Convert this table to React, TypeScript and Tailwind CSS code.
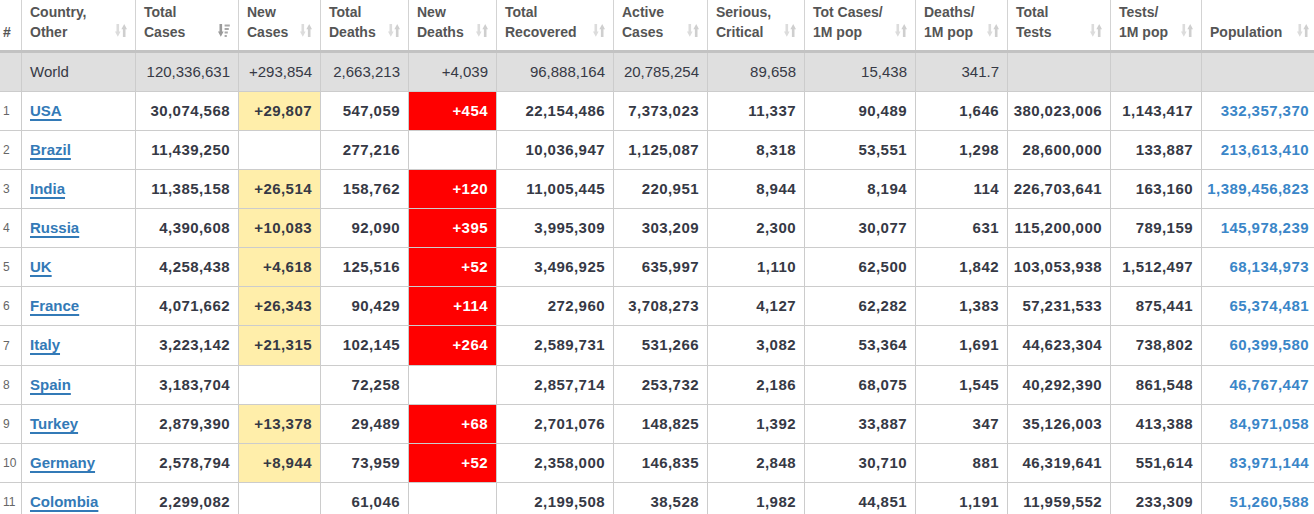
import React from 'react';

type Row = {
  n: string;
  country: string;
  cells: string[];
};

const headers: string[][] = [
  ['#'],
  ['Country,', 'Other'],
  ['Total', 'Cases'],
  ['New', 'Cases'],
  ['Total', 'Deaths'],
  ['New', 'Deaths'],
  ['Total', 'Recovered'],
  ['Active', 'Cases'],
  ['Serious,', 'Critical'],
  ['Tot Cases/', '1M pop'],
  ['Deaths/', '1M pop'],
  ['Total', 'Tests'],
  ['Tests/', '1M pop'],
  ['Population'],
];

const world = ['120,336,631', '+293,854', '2,663,213', '+4,039', '96,888,164', '20,785,254', '89,658', '15,438', '341.7', '', '', ''];

const rows: Row[] = [
  { n: '1', country: 'USA', cells: ['30,074,568', '+29,807', '547,059', '+454', '22,154,486', '7,373,023', '11,337', '90,489', '1,646', '380,023,006', '1,143,417', '332,357,370'] },
  { n: '2', country: 'Brazil', cells: ['11,439,250', '', '277,216', '', '10,036,947', '1,125,087', '8,318', '53,551', '1,298', '28,600,000', '133,887', '213,613,410'] },
  { n: '3', country: 'India', cells: ['11,385,158', '+26,514', '158,762', '+120', '11,005,445', '220,951', '8,944', '8,194', '114', '226,703,641', '163,160', '1,389,456,823'] },
  { n: '4', country: 'Russia', cells: ['4,390,608', '+10,083', '92,090', '+395', '3,995,309', '303,209', '2,300', '30,077', '631', '115,200,000', '789,159', '145,978,239'] },
  { n: '5', country: 'UK', cells: ['4,258,438', '+4,618', '125,516', '+52', '3,496,925', '635,997', '1,110', '62,500', '1,842', '103,053,938', '1,512,497', '68,134,973'] },
  { n: '6', country: 'France', cells: ['4,071,662', '+26,343', '90,429', '+114', '272,960', '3,708,273', '4,127', '62,282', '1,383', '57,231,533', '875,441', '65,374,481'] },
  { n: '7', country: 'Italy', cells: ['3,223,142', '+21,315', '102,145', '+264', '2,589,731', '531,266', '3,082', '53,364', '1,691', '44,623,304', '738,802', '60,399,580'] },
  { n: '8', country: 'Spain', cells: ['3,183,704', '', '72,258', '', '2,857,714', '253,732', '2,186', '68,075', '1,545', '40,292,390', '861,548', '46,767,447'] },
  { n: '9', country: 'Turkey', cells: ['2,879,390', '+13,378', '29,489', '+68', '2,701,076', '148,825', '1,392', '33,887', '347', '35,126,003', '413,388', '84,971,058'] },
  { n: '10', country: 'Germany', cells: ['2,578,794', '+8,944', '73,959', '+52', '2,358,000', '146,835', '2,848', '30,710', '881', '46,319,641', '551,614', '83,971,144'] },
  { n: '11', country: 'Colombia', cells: ['2,299,082', '', '61,046', '', '2,199,508', '38,528', '1,982', '44,851', '1,191', '11,959,552', '233,309', '51,260,588'] },
];

const gridCols =
  'grid grid-cols-[22px_114px_103px_82px_88px_88px_117px_94px_97px_111px_92px_103px_91px_116px]';

const SortIcon = ({ active }: { active?: boolean }) =>
  active ? (
    <svg width="12" height="13" viewBox="0 0 12 13" className="shrink-0 mb-[5px]">
      <rect x="1.5" y="0" width="2.6" height="8" fill="#9a9a9a" />
      <polygon points="0,7.5 5.6,7.5 2.8,12.8" fill="#9a9a9a" />
      <rect x="6.6" y="0.5" width="5.2" height="2" fill="#a8a8a8" />
      <rect x="6.6" y="4" width="4.2" height="2" fill="#a8a8a8" />
      <rect x="6.6" y="7.5" width="3.2" height="2" fill="#a8a8a8" />
      <rect x="6.6" y="11" width="2.2" height="2" fill="#a8a8a8" />
    </svg>
  ) : (
    <svg width="12" height="13" viewBox="0 0 12 13" className="shrink-0 mb-[5px]">
      <rect x="1.5" y="0" width="2.6" height="8" fill="#dcdcdc" />
      <polygon points="0,7.5 5.6,7.5 2.8,12.8" fill="#dcdcdc" />
      <polygon points="6.4,5.3 12,5.3 9.2,0" fill="#cfcfcf" />
      <rect x="7.9" y="5" width="2.6" height="8" fill="#cfcfcf" />
    </svg>
  );

const HeaderRow = () => (
  <div className={`${gridCols} h-[53px] border-b-[3px] border-[#c2c2c2] bg-white`}>
    {headers.map((h, i) => (
      <div
        key={i}
        className={`flex items-end justify-between border-r border-[#d3d3d3] pb-[8px] ${
          i === 0 ? 'pl-[3px]' : 'px-[8px]'
        }`}
      >
        <div className="text-[14px] font-bold leading-[20px] text-[#555555]">
          {h.map((line, j) => (
            <div key={j} className="whitespace-nowrap">
              {line}
            </div>
          ))}
        </div>
        {i > 0 && <SortIcon active={i === 2} />}
      </div>
    ))}
  </div>
);

const WorldRow = () => (
  <div className={`${gridCols} h-[39px] border-b border-[#cccccc] bg-[#dfdfdf] text-[15px] text-[#363945]`}>
    <div className="border-r border-[#cccccc]" />
    <div className="flex items-center border-r border-[#cccccc] pl-[8px]">World</div>
    {world.map((v, i) => (
      <div key={i} className="flex items-center justify-end border-r border-[#cccccc] pr-[8px]">
        {v}
      </div>
    ))}
  </div>
);

const DataRow = ({ row, tall }: { row: Row; tall?: boolean }) => (
  <div
    className={`${gridCols} ${
      tall ? 'h-[40px]' : 'h-[39px]'
    } border-b border-[#cccccc] bg-white text-[15px] font-bold text-[#363945]`}
  >
    <div className="flex items-center border-r border-[#cccccc] pl-[3px] text-[12px] font-normal text-[#666666]">
      {row.n}
    </div>
    <div className="flex items-center border-r border-[#cccccc] pl-[8px]">
      <a className="text-[#337ab7] underline decoration-2 underline-offset-[3px]">{row.country}</a>
    </div>
    {row.cells.map((v, i) => {
      let tone = '';
      if (i === 1 && v) tone = 'bg-[#ffeeaa]';
      if (i === 3 && v) tone = 'bg-[#ff0000] text-white';
      if (i === 11) tone = 'text-[#3a86c8]';
      return (
        <div
          key={i}
          className={`flex items-center justify-end border-r border-[#cccccc] pr-[8px] tracking-[0.45px] ${tone}`}
        >
          {v}
        </div>
      );
    })}
  </div>
);

export default function App() {
  return (
    <div className="h-[514px] w-full overflow-hidden bg-white font-['Liberation_Sans',Arial,sans-serif]">
      <div className="w-[1318px]">
        <HeaderRow />
        <WorldRow />
        {rows.map((r) => (
          <DataRow key={r.n} row={r} tall={r.n === '7'} />
        ))}
      </div>
    </div>
  );
}
